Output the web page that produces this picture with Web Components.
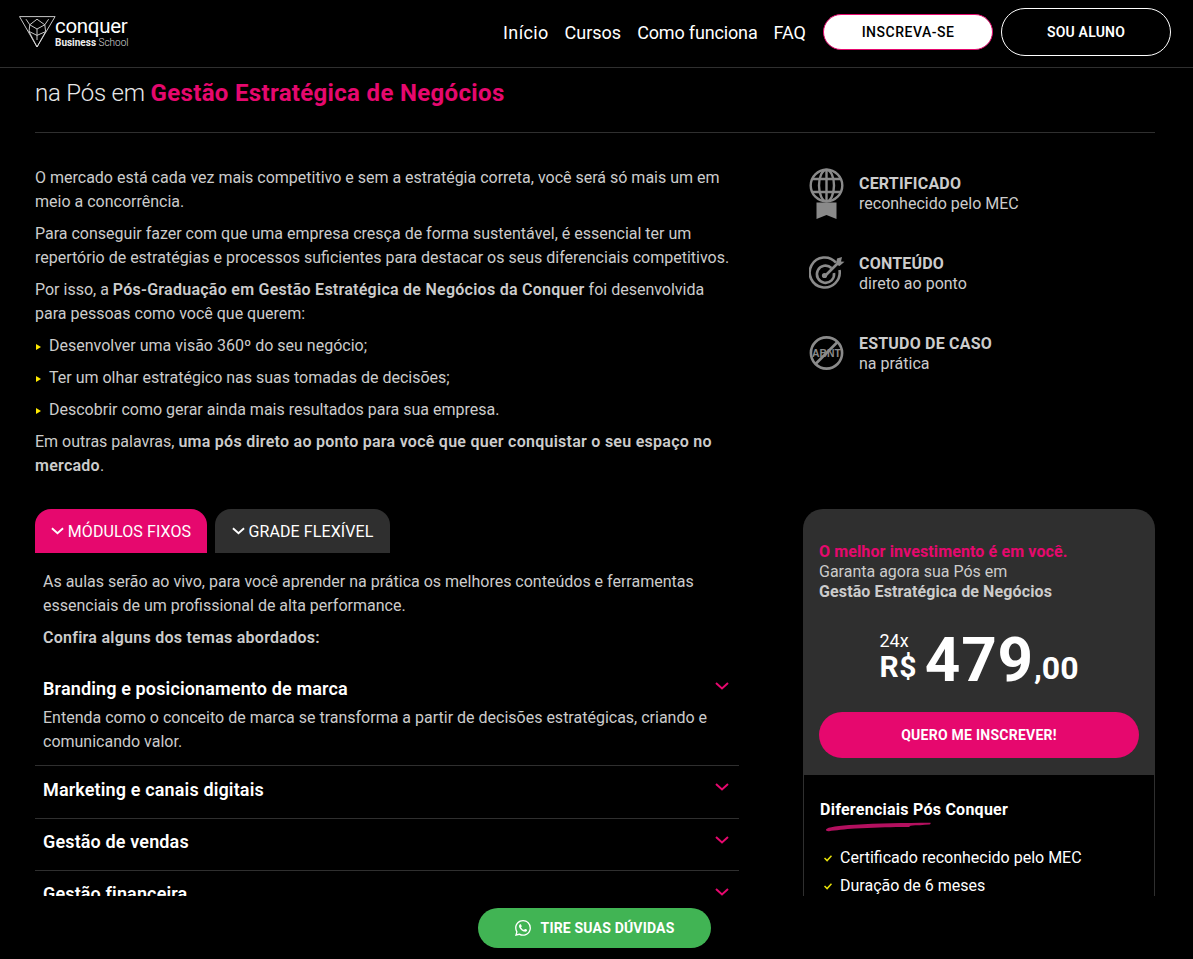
<!doctype html>
<html lang="pt-BR"><head><meta charset="utf-8"><title>Conquer Business School</title>
<style>
html,body{margin:0;height:959px;overflow:hidden;background:#000}
body{font-family:Roboto,"Liberation Sans",sans-serif;color:#ccc;display:flex;flex-direction:column}
strong{font-weight:600;letter-spacing:.26px}
</style></head>
<body>
<site-header></site-header>
<page-main>
  <hero-title><span>na Pós em </span><b slot="accent">Gestão Estratégica de Negócios</b></hero-title>
  <two-col>
    <rich-text>
      <p>O mercado está cada vez mais competitivo e sem a estratégia correta, você será só mais um em meio a concorrência.</p>
      <p>Para conseguir fazer com que uma empresa cresça de forma sustentável, é essencial ter um repertório de estratégias e processos suficientes para destacar os seus diferenciais competitivos.</p>
      <p>Por isso, a <strong>Pós-Graduação em Gestão Estratégica de Negócios da Conquer</strong> foi desenvolvida para pessoas como você que querem:</p>
      <bullet-item>Desenvolver uma visão 360º do seu negócio;</bullet-item>
      <bullet-item>Ter um olhar estratégico nas suas tomadas de decisões;</bullet-item>
      <bullet-item>Descobrir como gerar ainda mais resultados para sua empresa.</bullet-item>
      <p>Em outras palavras, <strong>uma pós direto ao ponto para você que quer conquistar o seu espaço no mercado</strong>.</p>
    </rich-text>
    <feature-list slot="side"></feature-list>
    <course-tabs slot="left2"></course-tabs>
    <side-card slot="right2"></side-card>
  </two-col>
</page-main>
<whats-bar></whats-bar>
<script>
const def=(name,html,setup)=>customElements.define(name,class extends HTMLElement{
  constructor(){super();this.attachShadow({mode:'open'}).innerHTML=html;if(setup)setup(this.shadowRoot,this)}
});
const chev=(c,w=14,sw=2)=>`<svg width="${w}" height="8" viewBox="0 0 14 8" fill="none" stroke="${c}" stroke-width="${sw}"><path d="M1 1l6 5.4L13 1"/></svg>`;

def('site-header',`<style>
:host{display:flex;flex:none;box-sizing:border-box;height:68px;border-bottom:1px solid #2f2f2f;align-items:center;padding:0 22px 3px 19px;color:#fff;background:#000}
.logo{display:flex;align-items:flex-start;height:32px}
.wm{display:flex;flex-direction:column;width:72px;margin:-1.5px 0 0 -1px}
.c{font-size:20.5px;line-height:22px;font-weight:400;letter-spacing:-.3px}
.b{font-size:10px;line-height:12px;color:#ddd;white-space:nowrap}
.b b{font-weight:700;color:#eee}.b span{font-weight:300}
nav{margin-left:auto;display:flex;align-items:center;gap:16px;font-size:18px}
nav span{white-space:nowrap}
nav .ini{letter-spacing:.35px}
nav .com{letter-spacing:-.16px}
.btn{box-sizing:border-box;display:flex;align-items:center;justify-content:center;width:170px;border-radius:24px;font-size:14px;font-weight:600;letter-spacing:.2px}
.ins{height:36px;background:#fff;color:#000;border:1px solid #e6086e;border-radius:18px;margin-left:1px;letter-spacing:.5px;font-weight:500}
.alu{height:48px;background:#000;color:#fff;border:1px solid #fff;margin-left:-8px}
</style>
<div class="logo"><svg width="37" height="32" viewBox="0 0 37 32" fill="none" stroke="#ddd" stroke-width=".9"><path d="M.5.6h35.6L18 31 .5.6z"/><path d="M7 3.2l3.8 5.6L10 15.4M29.6 3.2l-3.8 5.6.8 6.6M18 3.2l-7.2 5.6M18 3.2l7.8 5.6M18 13l-7.2-4.2M18 13l7.8-4.2M18 13v6.4M10 15.4l8 4 8.6-3.8M10 15.4L18 31M26.6 15.6L18 31M18 19.4L18 24"/></svg>
<div class="wm"><span class="c">conquer</span><span class="b"><b>Business</b> <span>School</span></span></div></div>
<nav><span class="ini">Início</span><span>Cursos</span><span class="com">Como funciona</span><span>FAQ</span><span class="btn ins">INSCREVA-SE</span><span class="btn alu">SOU ALUNO</span></nav>`);

def('page-main',`<style>:host{display:block;height:828px;flex:none;overflow:hidden;padding:0 38px 0 35px;background:#000}</style><slot></slot>`);

def('hero-title',`<style>
:host{display:block;padding:9px 0 23px;border-bottom:1px solid #2f2f2f;font-size:24px;line-height:32px;font-weight:300;color:#e9e9e9}
::slotted(span){letter-spacing:-.2px}
::slotted(b){color:#e6086e;font-weight:700;letter-spacing:.33px}
</style><slot></slot><slot name="accent"></slot>`);

def('two-col',`<style>
:host{display:grid;grid-template-columns:704px 352px;column-gap:64px;row-gap:23px;padding-top:32px}
</style><slot></slot><slot name="side"></slot><slot name="left2"></slot><slot name="right2"></slot>`);

def('rich-text',`<style>
:host{display:block;font-size:16px;line-height:24px;color:#ccc;padding-top:1px}
::slotted(p){margin:0 0 8px}
</style><slot></slot>`);

def('bullet-item',`<style>
:host{display:flex;align-items:center;margin-bottom:8px;gap:8px;padding-left:1px}
svg{flex:none;margin-top:2px}
</style><svg width="5" height="6" viewBox="0 0 5 6"><path d="M0 0l5 3-5 3z" fill="#ffea00"/></svg><span><slot></slot></span>`);

const ico={
globe:`<svg width="36" height="52" viewBox="0 0 36 52" fill="none" stroke="#8a8a8a" stroke-width="2.4"><circle cx="17.5" cy="17.5" r="15.8"/><ellipse cx="17.5" cy="17.5" rx="7.5" ry="15.8"/><path d="M17.5 1.5v32M3 11h29M3 24h29"/><path d="M7.5 34.5h20v16.5L17.5 47 7.5 51z" fill="#8a8a8a" stroke="none"/></svg>`,
target:`<svg width="36" height="36" viewBox="0 0 36 36" fill="none" stroke="#8a8a8a" stroke-width="2.6"><path d="M27 6.6A15 15 0 1 0 30.5 14"/><path d="M22.4 12a8.6 8.6 0 1 0 2.6 5"/><path d="M15.5 20.5L30 6"/><circle cx="15.5" cy="19.5" r="2.6" fill="#8a8a8a" stroke="none"/><path d="M27 8.5l1-6 5-1.5-1 4.5 3.5.2-5 4.3z" fill="#8a8a8a" stroke="none"/></svg>`,
abnt:`<svg width="36" height="36" viewBox="0 0 36 36" fill="none" stroke="#8a8a8a" stroke-width="2.6"><circle cx="17.5" cy="17" r="15.6"/><path d="M6.5 28L28.5 6"/><text x="17.5" y="20.6" text-anchor="middle" font-family="Liberation Sans" font-size="10.4" font-weight="700" fill="#8a8a8a" stroke="none">ABNT</text></svg>`};

def('feature-item',`<style>
:host{display:flex;height:40px;align-items:center;font-size:16px;line-height:20px;color:#ccc}
.i{width:50px;margin-left:6px;flex:none;display:flex;height:40px;align-items:center}
.t{display:flex;flex-direction:column}
b{font-weight:700;letter-spacing:.2px}
</style><div class="i"></div><div class="t"><b><slot name="h"></slot></b><span><slot></slot></span></div>`,
(r,h)=>{queueMicrotask(()=>{r.querySelector('.i').innerHTML=ico[h.getAttribute('icon')]})});

def('feature-list',`<style>:host{display:flex;flex-direction:column;gap:40px;padding-top:9px}</style>
<feature-item icon="globe"><span slot="h">CERTIFICADO</span>reconhecido pelo MEC</feature-item>
<feature-item icon="target"><span slot="h">CONTEÚDO</span>direto ao ponto</feature-item>
<feature-item icon="abnt"><span slot="h">ESTUDO DE CASO</span>na prática</feature-item>`);

def('acc-item',`<style>
:host{display:block;position:relative;padding:var(--pt,10px) 8px var(--pb,14px);border-bottom:1px solid #2f2f2f}
.h{font-size:18px;line-height:28px;font-weight:600;color:#fff;letter-spacing:.14px}
.d{font-size:16px;line-height:24px;color:#ccc}
.d.on{margin-top:3px}
svg{position:absolute;right:10px;top:var(--ct,17px)}
</style><div class="h"><slot name="h"></slot></div><div class="d"><slot></slot></div>${chev('#e6086e',14,2)}`,
(r,h)=>{queueMicrotask(()=>{if(h.hasAttribute('open'))r.querySelector('.d').classList.add('on')})});

def('course-tabs',`<style>
:host{display:block;font-size:16px;line-height:24px;color:#ccc}
.bar{display:flex;gap:8px}
.tab{box-sizing:border-box;padding-top:2px;display:flex;align-items:center;justify-content:center;gap:4px;height:44px;border-radius:16px 16px 0 0;color:#fff;white-space:nowrap;letter-spacing:.1px}
.tab svg{margin-top:-2px}
.a{width:172px;background:#e6086e}.g{width:175px;background:#2f2f2f}
.c{padding:17px 8px 0}
p{margin:0 0 8px}
b{font-weight:600;letter-spacing:.26px}
.list{margin-top:14px}
</style>
<div class="bar"><div class="tab a">${chev('#fff',13,2)}MÓDULOS FIXOS</div><div class="tab g">${chev('#fff',13,2)}GRADE FLEXÍVEL</div></div>
<div class="c"><p>As aulas serão ao vivo, para você aprender na prática os melhores conteúdos e ferramentas essenciais de um profissional de alta performance.</p><p><b>Confira alguns dos temas abordados:</b></p></div>
<div class="list">
<acc-item open style="--pt:11px;--pb:11px;--ct:18px"><span slot="h">Branding e posicionamento de marca</span>Entenda como o conceito de marca se transforma a partir de decisões estratégicas, criando e comunicando valor.</acc-item>
<acc-item><span slot="h">Marketing e canais digitais</span></acc-item>
<acc-item style="--pt:9px"><span slot="h">Gestão de vendas</span></acc-item>
<acc-item style="--pt:9px"><span slot="h">Gestão financeira</span></acc-item>
</div>`);

def('side-card',`<style>
:host{display:block;box-sizing:border-box}
.top{background:#2f2f2f;border-radius:20px 20px 0 0;height:266px;box-sizing:border-box;padding:33px 16px 0;font-size:16px;line-height:20px;color:#ccc}
.top b{display:block;font-weight:700;letter-spacing:.12px}
.pk{color:#e6086e}
.price{display:flex;justify-content:center;align-items:flex-end;color:#fff;margin-top:26px;height:64px}
.l{display:flex;flex-direction:column;margin-right:8px;align-self:flex-start;margin-top:3px}
.x{font-size:18px;line-height:20px}
.r{font-size:30px;line-height:32px;font-weight:700;letter-spacing:.5px}
.n{font-size:62px;line-height:64px;font-weight:700;letter-spacing:.8px}
.d{font-size:32px;line-height:40px;font-weight:700;margin-bottom:4px}
.cta{height:46px;margin-top:20px;border-radius:23px;background:#e6086e;color:#fff;font-size:14px;font-weight:700;display:flex;align-items:center;justify-content:center;letter-spacing:.25px}
.bot{border:solid #2f2f2f;border-width:0 1px;padding:25px 16px 0;height:140px;color:#fff}
h3{margin:0;font-size:16px;line-height:20px;font-weight:700;letter-spacing:.25px}
svg.br{display:block;margin:2px 0 0 5px}
ul{list-style:none;margin:12px 0 0;padding:0 0 0 4px;font-size:16px;line-height:28px}
li{display:flex;align-items:center;gap:8px}
</style>
<div class="top"><b class="pk">O melhor investimento é em você.</b>Garanta agora sua Pós em<b>Gestão Estratégica de Negócios</b>
<div class="price"><div class="l"><span class="x">24x</span><span class="r">R$</span></div><span class="n">479</span><span class="d">,00</span></div>
<div class="cta">QUERO ME INSCREVER!</div></div>
<div class="bot"><h3>Diferenciais Pós Conquer</h3>
<svg class="br" width="106" height="10" viewBox="0 0 106 10"><path d="M1 7.5C2 5 14 3.6 30 2.7 52 1.5 80 .9 105.5.8c.4.5 0 1.4-1 1.8-6 .5-13 .8-19 1.1l-1.5 1.3C70 4.6 50 5.4 30 6.6 20 7.3 10 8.6 4 9.2 2 9.4.8 8.6 1 7.5z" fill="#b4105f"/></svg>
<ul><li><svg width="8" height="7" viewBox="0 0 8 7" fill="none" stroke="#e8e20a" stroke-width="1.5"><path d="M.5 3l2.6 2.6L7.5.7"/></svg>Certificado reconhecido pelo MEC</li>
<li><svg width="8" height="7" viewBox="0 0 8 7" fill="none" stroke="#e8e20a" stroke-width="1.5"><path d="M.5 3l2.6 2.6L7.5.7"/></svg>Duração de 6 meses</li></ul></div>`);

def('whats-bar',`<style>
:host{flex:none;height:63px;display:flex;justify-content:center;align-items:flex-start;padding-top:12px;box-sizing:border-box;background:#000}
.b{box-sizing:border-box;width:233px;height:40px;border-radius:20px;background:#41b454;color:#fff;display:flex;align-items:center;justify-content:center;gap:10px;font-size:14px;font-weight:700;margin-left:-4px;letter-spacing:.18px}
</style><div class="b"><svg width="16" height="16" viewBox="0 0 24 24" fill="#fff"><path d="M17.472 14.382c-.297-.149-1.758-.867-2.03-.967-.273-.099-.471-.148-.67.15-.197.297-.767.966-.94 1.164-.173.199-.347.223-.644.075-.297-.15-1.255-.463-2.39-1.475-.883-.788-1.48-1.761-1.653-2.059-.173-.297-.018-.458.13-.606.134-.133.298-.347.446-.52.149-.174.198-.298.298-.497.099-.198.05-.371-.025-.52-.075-.149-.669-1.612-.916-2.207-.242-.579-.487-.5-.669-.51-.173-.008-.371-.01-.57-.01-.198 0-.52.074-.792.372-.272.297-1.04 1.016-1.04 2.479 0 1.462 1.065 2.875 1.213 3.074.149.198 2.096 3.2 5.077 4.487.709.306 1.262.489 1.694.625.712.227 1.36.195 1.871.118.571-.085 1.758-.719 2.006-1.413.248-.694.248-1.289.173-1.413-.074-.124-.272-.198-.57-.347m-5.421 7.403h-.004a9.87 9.87 0 01-5.031-1.378l-.361-.214-3.741.982.998-3.648-.235-.374a9.86 9.86 0 01-1.51-5.26c.001-5.45 4.436-9.884 9.888-9.884 2.64 0 5.122 1.03 6.988 2.898a9.825 9.825 0 012.893 6.994c-.003 5.45-4.437 9.884-9.885 9.884m8.413-18.297A11.815 11.815 0 0012.05 0C5.495 0 .16 5.335.157 11.892c0 2.096.547 4.142 1.588 5.945L.057 24l6.305-1.654a11.882 11.882 0 005.683 1.448h.005c6.554 0 11.89-5.335 11.893-11.893a11.821 11.821 0 00-3.48-8.413z"/></svg>TIRE SUAS DÚVIDAS</div>`);
</script>
</body></html>
